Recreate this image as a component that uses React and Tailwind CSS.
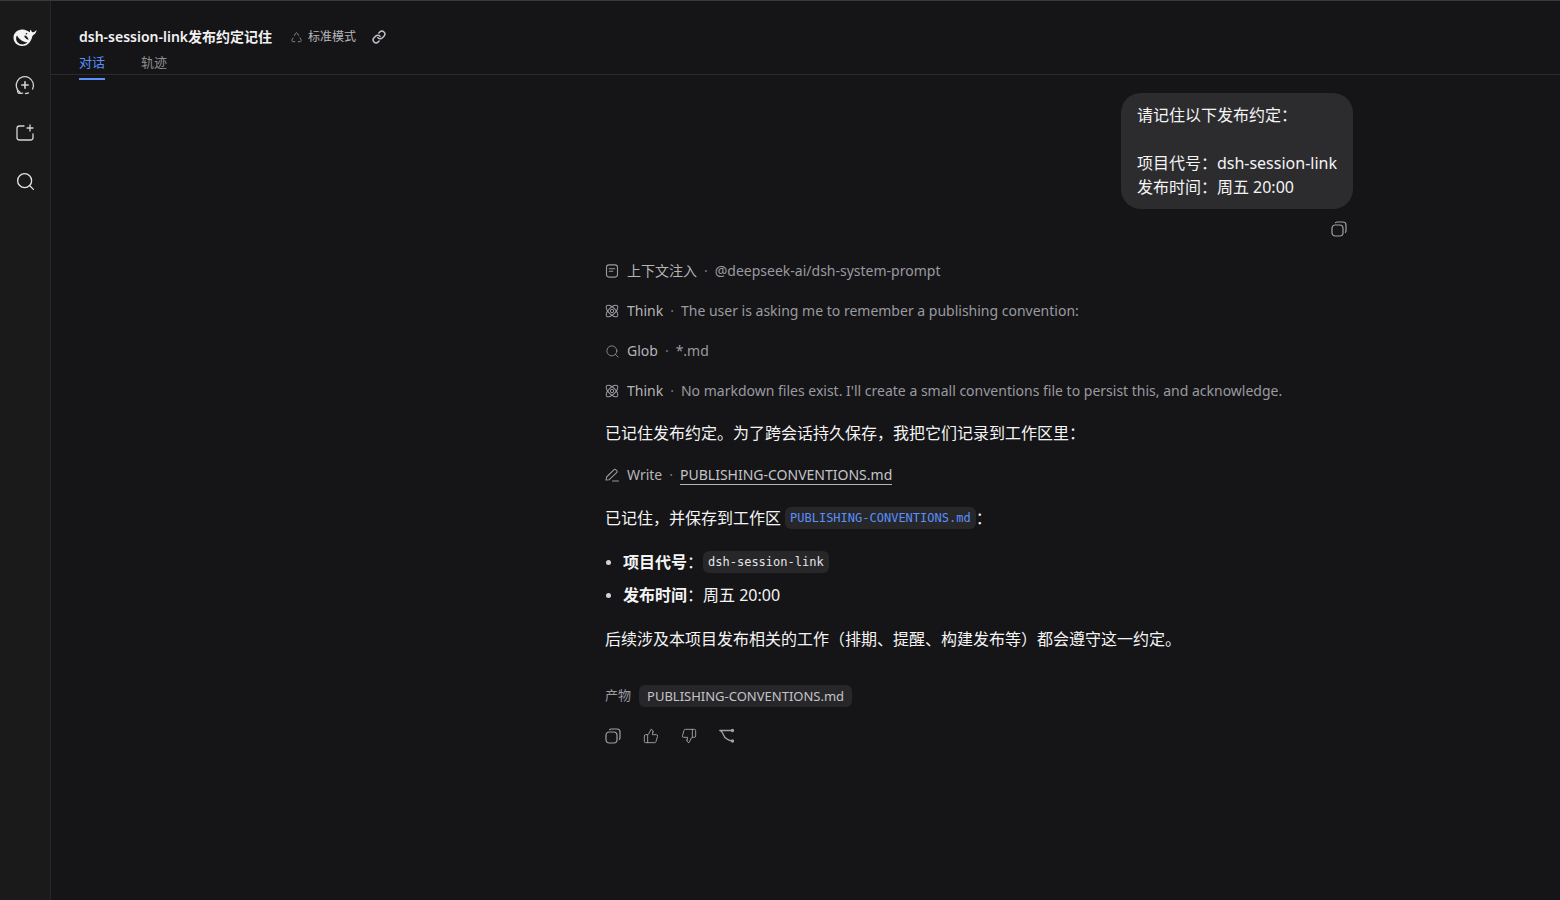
import React from "react";
import { Search, ThumbsUp, ThumbsDown, Link } from "lucide-react";

const sans = "font-['Noto_Sans','Noto_Sans_CJK_SC',sans-serif]";

const CopyIcon = ({ className }) => (
  <svg viewBox="0 0 16 16" className={className} fill="none" stroke="currentColor" strokeWidth="1.2">
    <rect x="1" y="4" width="11" height="11" rx="3.2" />
    <path d="M4.5 1.6C5 1.2 5.6 1 6.2 1H12c1.7 0 3 1.3 3 3v5.6c0 .7-.2 1.3-.6 1.8" strokeLinecap="round" />
  </svg>
);

const WhaleLogo = () => (
  <svg viewBox="0 0 24 20" className="h-[20px] w-[24px]">
    <path
      fill="#f4f4f5"
      d="M23.6 3.2c-.5-.2-.8.4-1.2.7-.1.1-.2.2-.3.3-.6.6-1.3 1-2.2 1-.9 0-.9-.5-1.6-1.5-.2-.4-.5-.9-.9-1-.4-.1-.2.8-.3 1.2-.1.5-.2.9-.3 1.3C14.800 3.900 12.500 2.800 9.500 2.600 5 2.300.6 6 .5 10.500.4 15.200 4.200 18.800 9 19c2.900.1 5.600-1.300 7.300-3.300 1.600-1.900 2.400-3.900 3.100-6.400.2-.7.9-1.200 1.600-1.700 1.100-.8 2.200-2.400 2.600-4.400z"
    />
    <path fill="#1a1a1b" d="M4 8.500c2.500 4.500 7 7 10.500 6.800-1.800 1.800-4.300 2.500-6.500 2-3-.7-5-3.500-4.900-6.100 0-1 .3-2 .9-2.700z" />
    <path fill="#1a1a1b" d="M12.500 8.500c1.300.7 2.800 2.600 3 4.500-2-.6-3.800-2.300-4.300-4 .2-.4.800-.7 1.300-.5z" />
    <circle cx="13.500" cy="6.800" r=".8" fill="#1a1a1b" />
  </svg>
);

const NewChatIcon = () => (
  <svg viewBox="0 0 20 20" className="h-[20px] w-[20px]" fill="none" stroke="#d4d4d8" strokeWidth="1.3" strokeLinecap="round">
    <path d="M5 17.400A8.600 8.600 0 1 1 17.600 14" />
    <path d="M2.400 14.500c.1 1.500.3 2.500.8 3.300 1.300.5 3 .6 4.400.4" />
    <path d="M10.500 18.500c1 0 2-.2 3-.6" />
    <path d="M10 6.800v6.400M6.800 10h6.400" strokeWidth="1.600" />
  </svg>
);

const NewFolderIcon = () => (
  <svg viewBox="0 0 20 20" className="h-[20px] w-[20px]" fill="none" stroke="#d4d4d8" strokeWidth="1.3" strokeLinecap="round">
    <path d="M9 3H4.500A2.500 2.500 0 0 0 2 5.500v9A2.500 2.500 0 0 0 4.500 17h11a2.500 2.500 0 0 0 2.500-2.500V11" />
    <path d="M15 2v6M12 5h6" />
  </svg>
);

const ModeIcon = () => (
  <svg viewBox="0 0 14 14" className="h-[13px] w-[13px]" fill="none" stroke="#8e8e93" strokeWidth="1">
    <path d="M4.600 5.200 6 2.600c.5-.9 1.500-.9 2 0l1.400 2.500" />
    <path d="M10.500 7l1.400 2.500c.5 1-.1 2-1.200 2H8.500" />
    <path d="M5.600 11.500H3.300c-1.100 0-1.700-1-1.200-2L3.500 7.200" />
  </svg>
);

const DocIcon = () => (
  <svg viewBox="0 0 14 14" className="h-[14px] w-[14px]" fill="none" stroke="#9a9aa0" strokeWidth="1.100" strokeLinecap="round">
    <rect x="1.500" y=".9" width="11" height="12.200" rx="2.500" />
    <path d="M4.300 4.700h5.400M4.300 7.300h3.500" />
  </svg>
);

const AtomIcon = () => (
  <svg viewBox="0 0 14 14" className="h-[14px] w-[14px]" fill="none" stroke="#9a9aa0" strokeWidth="1">
    <ellipse cx="7" cy="7" rx="7.500" ry="3.400" transform="rotate(45 7 7)" />
    <ellipse cx="7" cy="7" rx="7.500" ry="3.400" transform="rotate(-45 7 7)" />
    <circle cx="7" cy="7" r="1.700" />
  </svg>
);

const PenIcon = () => (
  <svg viewBox="0 0 14 14" className="h-[14px] w-[14px]" fill="none" stroke="#9a9aa0" strokeWidth="1.100" strokeLinecap="round" strokeLinejoin="round">
    <path d="M1 12l.6-3L8.800 1.800a1.500 1.500 0 0 1 2.200 0l.6.600a1.500 1.500 0 0 1 0 2.200L4.200 11.700 1 12z" />
    <path d="M7.500 13h6" />
  </svg>
);

const BranchIcon = () => (
  <svg viewBox="0 0 16 16" className="h-[16px] w-[16px]" fill="none" stroke="#a1a1a6" strokeWidth="1.300" strokeLinecap="round" strokeLinejoin="round">
    <path d="M1 2.500h12" />
    <path d="M1 2.500c1.500 0 2.500 2 3.500 4.500 1 2.500 3.500 5 8.500 6" />
    <circle cx="13.500" cy="2.500" r="1" fill="#a1a1a6" />
    <circle cx="13.500" cy="13" r="1" fill="#a1a1a6" />
  </svg>
);

const ToolRow = ({ icon, name, detail, className }) => (
  <div className={`flex h-[20px] items-center text-[14px] leading-[20px] ${className}`}>
    <span className="flex w-[22px] shrink-0 items-center">{icon}</span>
    <span className="text-[#b4b4b8]">{name}</span>
    <span className="mx-[7px] text-[#77777c]">·</span>
    {detail}
  </div>
);

export default function App() {
  return (
    <div className={`flex h-[900px] overflow-hidden border-t border-[#3a3a3d] bg-[#151517] text-white ${sans}`}>
      <aside className="flex w-[51px] shrink-0 flex-col items-center border-r border-[#262628] bg-[#1a1a1b] pt-[26px]">
        <WhaleLogo />
        <div className="mt-[28px]"><NewChatIcon /></div>
        <div className="mt-[28px]"><NewFolderIcon /></div>
        <Search className="mt-[28px] text-[#e4e4e7]" size={21} strokeWidth={1.500} />
      </aside>

      <main className="flex min-w-0 flex-1 flex-col">
        <header className="h-[74px] shrink-0 border-b border-[#2b2b2e] pl-[28px]">
          <div className="flex h-[20px] items-center pt-[36px]">
            <h1 className="text-[14px] font-semibold leading-[20px] text-[#f2f2f3]">dsh-session-link发布约定记住</h1>
            <span className="ml-[18px]"><ModeIcon /></span>
            <span className="ml-[5px] text-[12px] text-[#b8b8bc]">标准模式</span>
            <Link className="ml-[16px] text-[#c8c2d0]" size={14} strokeWidth={2.500} />
          </div>
          <nav className="mt-[16px] flex gap-[36px] text-[13px] leading-[18px]">
            <span className="relative h-[27px] w-[26px] text-[#5b8ff9]">
              对话
              <span className="absolute bottom-0 left-0 h-[2px] w-[26px] bg-[#5b8ff9]" />
            </span>
            <span className="text-[#8e8e93]">轨迹</span>
          </nav>
        </header>

        <div className="pl-[554px] pt-[18px]">
          <div className="flex w-[748px] flex-col">
            <div className="self-end rounded-[20px] bg-[#2c2c2e] px-[16px] py-[10px] text-[16px] leading-[24px] text-[#f4f4f5]">
              <p>请记住以下发布约定：</p>
              <p className="h-[24px]" />
              <p>项目代号：dsh-session-link</p>
              <p>发布时间：周五 20:00</p>
            </div>
            <div className="mt-[12px] flex justify-end pr-[6px]">
              <CopyIcon className="h-[16px] w-[16px] text-[#a1a1a6]" />
            </div>

            <ToolRow
              className="mt-[24px]"
              icon={<DocIcon />}
              name="上下文注入"
              detail={<span className="text-[#9a9aa0]">@deepseek-ai/dsh-system-prompt</span>}
            />
            <ToolRow
              className="mt-[20px]"
              icon={<AtomIcon />}
              name="Think"
              detail={<span className="text-[#9a9aa0]">The user is asking me to remember a publishing convention:</span>}
            />
            <ToolRow
              className="mt-[20px]"
              icon={<Search size={15} strokeWidth={1.300} className="text-[#9a9aa0]" />}
              name="Glob"
              detail={<span className="text-[#9a9aa0]">*.md</span>}
            />
            <ToolRow
              className="mt-[20px]"
              icon={<AtomIcon />}
              name="Think"
              detail={<span className="text-[#9a9aa0]">No markdown files exist. I'll create a small conventions file to persist this, and acknowledge.</span>}
            />

            <p className="mt-[20px] text-[16px] leading-[24px] text-[#f4f4f5]">已记住发布约定。为了跨会话持久保存，我把它们记录到工作区里：</p>

            <ToolRow
              className="mt-[20px]"
              icon={<PenIcon />}
              name="Write"
              detail={<span className="border-b border-[#b4b4b8] leading-[18px] text-[#c4c4c8]">PUBLISHING-CONVENTIONS.md</span>}
            />

            <p className="mt-[21px] flex h-[24px] items-center text-[16px] leading-[24px] text-[#f4f4f5]">
              已记住，并保存到工作区
              <code className="ml-[4px] rounded-[6px] bg-[#27272a] px-[5px] font-['DejaVu_Sans_Mono',monospace] text-[12px] leading-[22px] text-[#5b8ff9]">PUBLISHING-CONVENTIONS.md</code>
              ：
            </p>

            <ul className="mt-[20px] flex flex-col gap-[9px] text-[16px] leading-[24px] text-[#f4f4f5]">
              <li className="flex h-[24px] items-center">
                <span className="mr-[12px] ml-[1px] h-[5px] w-[5px] rounded-full bg-[#d4d4d8]" />
                <strong className="font-bold">项目代号</strong>：
                <code className="rounded-[6px] bg-[#27272a] px-[5px] font-['DejaVu_Sans_Mono',monospace] text-[12px] leading-[22px] text-[#e4e4e7]">dsh-session-link</code>
              </li>
              <li className="flex h-[24px] items-center">
                <span className="mr-[12px] ml-[1px] h-[5px] w-[5px] rounded-full bg-[#d4d4d8]" />
                <strong className="font-bold">发布时间</strong>：周五 20:00
              </li>
            </ul>

            <p className="mt-[20px] text-[16px] leading-[24px] text-[#f4f4f5]">后续涉及本项目发布相关的工作（排期、提醒、构建发布等）都会遵守这一约定。</p>

            <div className="mt-[34px] flex items-center gap-[8px]">
              <span className="text-[13px] text-[#9a9aa0]">产物</span>
              <span className="rounded-[6px] bg-[#27272a] px-[8px] text-[13px] leading-[22px] text-[#c4c4c8]">PUBLISHING-CONVENTIONS.md</span>
            </div>

            <div className="mt-[21px] flex items-center gap-[22px] text-[#a1a1a6]">
              <CopyIcon className="h-[16px] w-[16px]" />
              <ThumbsUp size={16} strokeWidth={1.400} />
              <ThumbsDown size={16} strokeWidth={1.400} />
              <BranchIcon />
            </div>
          </div>
        </div>
      </main>
    </div>
  );
}
